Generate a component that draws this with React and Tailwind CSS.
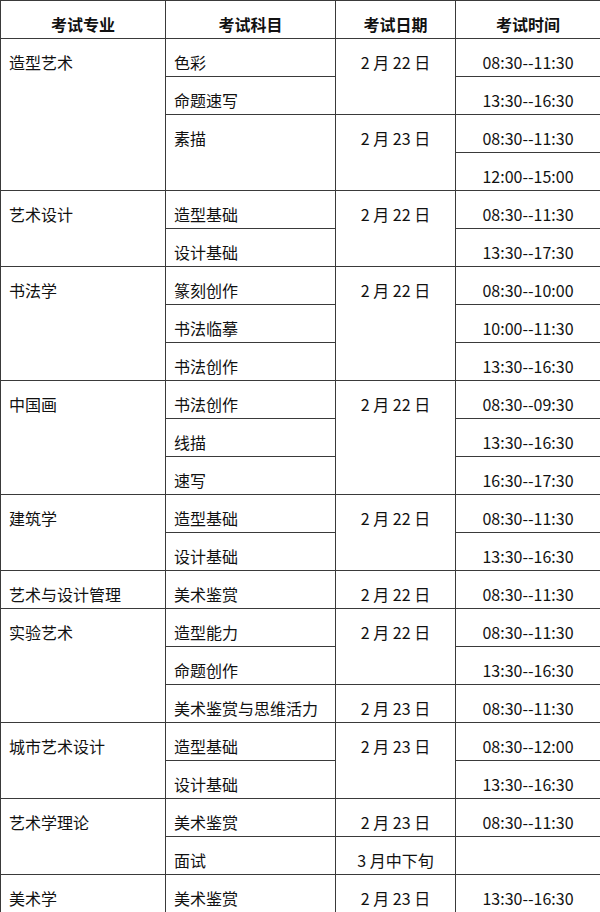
import React from "react";

const rows = [
  { major: "造型艺术", span: 4, subject: "色彩", date: "2 月 22 日", dateSpan: 2, time: "08:30--11:30" },
  { subject: "命题速写", time: "13:30--16:30" },
  { subject: "素描", subjectSpan: 2, date: "2 月 23 日", dateSpan: 2, time: "08:30--11:30" },
  { time: "12:00--15:00" },
  { major: "艺术设计", span: 2, subject: "造型基础", date: "2 月 22 日", dateSpan: 2, time: "08:30--11:30" },
  { subject: "设计基础", time: "13:30--17:30" },
  { major: "书法学", span: 3, subject: "篆刻创作", date: "2 月 22 日", dateSpan: 3, time: "08:30--10:00" },
  { subject: "书法临摹", time: "10:00--11:30" },
  { subject: "书法创作", time: "13:30--16:30" },
  { major: "中国画", span: 3, subject: "书法创作", date: "2 月 22 日", dateSpan: 3, time: "08:30--09:30" },
  { subject: "线描", time: "13:30--16:30" },
  { subject: "速写", time: "16:30--17:30" },
  { major: "建筑学", span: 2, subject: "造型基础", date: "2 月 22 日", dateSpan: 2, time: "08:30--11:30" },
  { subject: "设计基础", time: "13:30--16:30" },
  { major: "艺术与设计管理", span: 1, subject: "美术鉴赏", date: "2 月 22 日", dateSpan: 1, time: "08:30--11:30" },
  { major: "实验艺术", span: 3, subject: "造型能力", date: "2 月 22 日", dateSpan: 2, time: "08:30--11:30" },
  { subject: "命题创作", time: "13:30--16:30" },
  { subject: "美术鉴赏与思维活力", date: "2 月 23 日", dateSpan: 1, time: "08:30--11:30" },
  { major: "城市艺术设计", span: 2, subject: "造型基础", date: "2 月 23 日", dateSpan: 2, time: "08:30--12:00" },
  { subject: "设计基础", time: "13:30--16:30" },
  { major: "艺术学理论", span: 2, subject: "美术鉴赏", date: "2 月 23 日", dateSpan: 1, time: "08:30--11:30" },
  { subject: "面试", date: "3 月中下旬", dateSpan: 1, time: "" },
  { major: "美术学", span: 1, subject: "美术鉴赏", date: "2 月 23 日", dateSpan: 1, time: "13:30--16:30" },
];

const cell = "border border-[#3a3a3a] align-top h-[38px] pt-[12px] pb-0 leading-[22px] whitespace-nowrap";

export default function App() {
  return (
    <div
      className="w-[600px] h-[912px] overflow-hidden bg-white text-[#111] text-[16px]"
      style={{ fontFamily: '"Noto Sans CJK SC", "Noto Sans", sans-serif' }}
    >
      <table className="w-[600px] table-fixed border-collapse">
        <colgroup>
          <col className="w-[165px]" />
          <col className="w-[170px]" />
          <col className="w-[120px]" />
          <col className="w-[145px]" />
        </colgroup>
        <thead>
          <tr>
            <th className={`${cell} text-center font-bold`}>考试专业</th>
            <th className={`${cell} text-center font-bold`}>考试科目</th>
            <th className={`${cell} text-center font-bold`}>考试日期</th>
            <th className={`${cell} text-center font-bold`}>考试时间</th>
          </tr>
        </thead>
        <tbody>
          {rows.map((r, i) => (
            <tr key={i}>
              {r.major && (
                <td rowSpan={r.span} className={`${cell} pl-[8px] text-left`}>
                  {r.major}
                </td>
              )}
              {r.subject && (
                <td rowSpan={r.subjectSpan || 1} className={`${cell} pl-[8px] text-left`}>
                  {r.subject}
                </td>
              )}
              {r.date && (
                <td rowSpan={r.dateSpan} className={`${cell} text-center`}>
                  {r.date}
                </td>
              )}
              <td className={`${cell} text-center`}>{r.time}</td>
            </tr>
          ))}
        </tbody>
      </table>
    </div>
  );
}
